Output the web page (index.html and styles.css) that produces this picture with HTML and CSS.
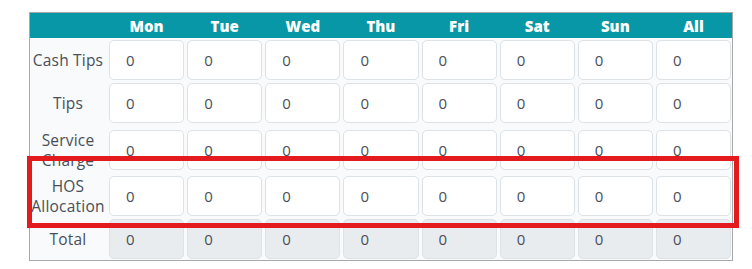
FILE: index.html
```html
<!DOCTYPE html>
<html lang="en">
<head>
  <meta charset="UTF-8" />
  <meta name="viewport" content="width=device-width, initial-scale=1.0" />
  <title>Weekly Tips</title>
  <link rel="stylesheet" href="styles.css">
</head>
<body>
  <div class="page">
    <div class="tips-table">
      <div class="tips-head">
        <div></div>
        <div>Mon</div>
        <div>Tue</div>
        <div>Wed</div>
        <div>Thu</div>
        <div>Fri</div>
        <div>Sat</div>
        <div>Sun</div>
        <div>All</div>
      </div>

      <div class="tips-body" id="tips-body"></div>
    </div>

    <div class="highlight"></div>
  </div>

  <script>
    const rows = [
      { label: 'Cash Tips' },
      { label: 'Tips' },
      { label: 'Service Charge', tall: true },
      { label: 'HOS Allocation' },
      { label: 'Total', readonly: true }
    ];

    const body = document.getElementById('tips-body');

    rows.forEach(row => {
      const label = document.createElement('div');
      label.className = 'row-label';
      label.textContent = row.label;
      body.appendChild(label);

      for (let i = 0; i < 8; i++) {
        const input = document.createElement('input');
        input.type = 'text';
        input.value = '0';
        input.className = 'cell';
        if (row.readonly) {
          input.readOnly = true;
          input.classList.add('total');
        }
        body.appendChild(input);
      }
    });
  </script>
</body>
</html>
```

FILE: styles.css
```css
:root {
  --teal: #0897a6;
  --border: #dde2e6;
  --text: #4a4f57;
}

* {
  box-sizing: border-box;
  margin: 0;
  padding: 0;
  font-family: 'Open Sans', sans-serif;
}

body {
  background-color: white;
}

.page {
  position: relative;
  padding: 12px 0 0 29px;
}

.tips-table {
  width: 704px;
  border: 1px solid #a9a9a9;
  background-color: #f8fafc;
}

.tips-head,
.tips-body {
  display: grid;
  grid-template-columns: 76px repeat(8, 1fr);
  column-gap: 3px;
  padding-right: 1px;
}

.tips-head {
  background-color: var(--teal);
  color: white;
  font-weight: 800;
  font-size: 15px;
  height: 25px;
  line-height: 24px;
  align-items: center;
  text-align: center;
}

.tips-body {
  grid-template-rows: 40px 40px 47px 40px 40px;
  row-gap: 3px;
  padding-top: 2px;
  padding-bottom: 1px;
  align-items: center;
}

.row-label {
  text-align: center;
  font-size: 15.5px;
  letter-spacing: 0.2px;
  line-height: 20px;
  color: var(--text);
}

.cell {
  width: 100%;
  height: 40px;
  border: 1px solid var(--border);
  border-radius: 5px;
  background-color: white;
  padding: 0 16px;
  font-size: 15px;
  color: var(--text);
  outline: none;
}

.cell.total {
  background-color: #e9ecef;
}

.highlight {
  position: absolute;
  left: 27px;
  top: 156px;
  width: 712px;
  height: 72px;
  border: 5px solid #e31b1f;
  pointer-events: none;
}
```
